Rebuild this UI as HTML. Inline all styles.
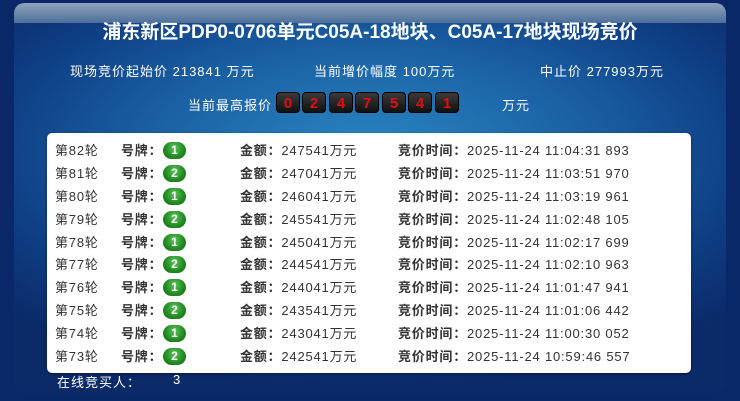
<!DOCTYPE html>
<html><head><meta charset="utf-8"><style>
*{margin:0;padding:0;box-sizing:border-box}
body{width:740px;height:401px;overflow:hidden;background:#0a2868;font-family:"Liberation Sans","Noto Sans CJK SC",sans-serif;position:relative}
.panel{position:absolute;left:14px;top:3px;width:712px;height:390px;border-radius:10px;overflow:hidden;
background:radial-gradient(ellipse 70% 60% at 50% 38%,#2a86c4 0%,#1a5fa3 45%,#0f3f85 75%,#0b2a68 100%)}
.strip{position:absolute;left:0;top:0;width:100%;height:20px;background:linear-gradient(#8fa3bd,#4d6f9a);border-radius:10px 10px 0 0}
.t{position:absolute;color:#fff;white-space:nowrap;font-size:13px;letter-spacing:1px}
h1{position:absolute;left:0;width:740px;top:17px;text-align:center;color:#fff;font-size:19px;font-weight:bold}
.dig{position:absolute;top:92px;width:24px;height:21px;background:linear-gradient(#3a3a3a,#111);border-radius:4px;color:#e01010;font-weight:bold;font-size:15px;text-align:center;line-height:21px;border:1px solid #000}
.tbl{position:absolute;left:47px;top:133px;width:644px;height:240px;background:#fff;border-radius:5px;box-shadow:0 1px 3px rgba(0,0,0,.4)}
.row{position:absolute;left:0;height:23px;width:100%;font-size:13px;color:#333;line-height:23px;letter-spacing:0.8px}
.row span{position:absolute;white-space:nowrap}
.b{font-weight:bold}
.badge{position:absolute;left:116px;top:3px;width:23px;height:17px;border-radius:9px;background:radial-gradient(circle at 50% 35%,#5cc35c,#1f8a1f 60%,#0f5f0f);color:#fff;font-weight:bold;font-size:12px;text-align:center;line-height:17px;letter-spacing:0}
</style></head><body>
<div class="panel"><div class="strip"></div></div>
<h1>浦东新区PDP0-0706单元C05A-18地块、C05A-17地块现场竞价</h1>
<div class="t" style="left:70px;top:61px">现场竞价起始价 213841 万元</div>
<div class="t" style="left:314px;top:61px">当前增价幅度 100万元</div>
<div class="t" style="left:540px;top:61px">中止价 277993万元</div>
<div class="t" style="left:188px;top:95px">当前最高报价</div>
<div class="dig" style="left:276px">0</div><div class="dig" style="left:302px">2</div><div class="dig" style="left:329px">4</div><div class="dig" style="left:355px">7</div><div class="dig" style="left:382px">5</div><div class="dig" style="left:408px">4</div><div class="dig" style="left:435px">1</div>
<div class="t" style="left:502px;top:95px">万元</div>
<div class="tbl">
<div class="row" style="top:6px"><span style="left:8px">第82轮</span><span class="b" style="left:74px">号牌：</span><div class="badge">1</div><span style="left:193px"><b>金额：</b>247541万元</span><span style="left:351px"><b>竞价时间：</b>2025-11-24 11:04:31 893</span></div>
<div class="row" style="top:29px"><span style="left:8px">第81轮</span><span class="b" style="left:74px">号牌：</span><div class="badge">2</div><span style="left:193px"><b>金额：</b>247041万元</span><span style="left:351px"><b>竞价时间：</b>2025-11-24 11:03:51 970</span></div>
<div class="row" style="top:52px"><span style="left:8px">第80轮</span><span class="b" style="left:74px">号牌：</span><div class="badge">1</div><span style="left:193px"><b>金额：</b>246041万元</span><span style="left:351px"><b>竞价时间：</b>2025-11-24 11:03:19 961</span></div>
<div class="row" style="top:75px"><span style="left:8px">第79轮</span><span class="b" style="left:74px">号牌：</span><div class="badge">2</div><span style="left:193px"><b>金额：</b>245541万元</span><span style="left:351px"><b>竞价时间：</b>2025-11-24 11:02:48 105</span></div>
<div class="row" style="top:98px"><span style="left:8px">第78轮</span><span class="b" style="left:74px">号牌：</span><div class="badge">1</div><span style="left:193px"><b>金额：</b>245041万元</span><span style="left:351px"><b>竞价时间：</b>2025-11-24 11:02:17 699</span></div>
<div class="row" style="top:120px"><span style="left:8px">第77轮</span><span class="b" style="left:74px">号牌：</span><div class="badge">2</div><span style="left:193px"><b>金额：</b>244541万元</span><span style="left:351px"><b>竞价时间：</b>2025-11-24 11:02:10 963</span></div>
<div class="row" style="top:143px"><span style="left:8px">第76轮</span><span class="b" style="left:74px">号牌：</span><div class="badge">1</div><span style="left:193px"><b>金额：</b>244041万元</span><span style="left:351px"><b>竞价时间：</b>2025-11-24 11:01:47 941</span></div>
<div class="row" style="top:166px"><span style="left:8px">第75轮</span><span class="b" style="left:74px">号牌：</span><div class="badge">2</div><span style="left:193px"><b>金额：</b>243541万元</span><span style="left:351px"><b>竞价时间：</b>2025-11-24 11:01:06 442</span></div>
<div class="row" style="top:189px"><span style="left:8px">第74轮</span><span class="b" style="left:74px">号牌：</span><div class="badge">1</div><span style="left:193px"><b>金额：</b>243041万元</span><span style="left:351px"><b>竞价时间：</b>2025-11-24 11:00:30 052</span></div>
<div class="row" style="top:212px"><span style="left:8px">第73轮</span><span class="b" style="left:74px">号牌：</span><div class="badge">2</div><span style="left:193px"><b>金额：</b>242541万元</span><span style="left:351px"><b>竞价时间：</b>2025-11-24 10:59:46 557</span></div>
</div>
<div class="t" style="left:57px;top:372px">在线竞买人：</div>
<div class="t" style="left:173px;top:372px">3</div>
</body></html>
